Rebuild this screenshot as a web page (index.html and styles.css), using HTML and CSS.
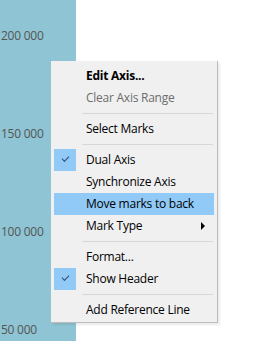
FILE: index.html
```html
<!DOCTYPE html>
<html lang="en">
<head>
    <meta charset="UTF-8">
    <title>Axis menu</title>
    <link rel="stylesheet" href="styles.css">
</head>
<body>
    <div class="view">
        <div class="axis">
            <div class="tick">200 000</div>
            <div class="tick">150 000</div>
            <div class="tick">100 000</div>
            <div class="tick">50 000</div>
        </div>

        <!-- context menu over the axis -->
        <ul class="menu">
            <li class="item bold">Edit Axis...</li>
            <li class="item disabled">Clear Axis Range</li>
            <li class="sep"></li>
            <li class="item">Select Marks</li>
            <li class="sep"></li>
            <li class="item checked">Dual Axis</li>
            <li class="item">Synchronize Axis</li>
            <li class="item active">Move marks to back</li>
            <li class="item sub">Mark Type</li>
            <li class="sep"></li>
            <li class="item">Format...</li>
            <li class="item checked">Show Header</li>
            <li class="sep"></li>
            <li class="item">Add Reference Line</li>
        </ul>
    </div>
</body>
</html>
```

FILE: styles.css
```css
*{
    box-sizing: border-box;
    margin: 0;
    padding: 0;
    list-style-type: none;
}
html, body{
    overflow: hidden;
}
body{
    background-color: white;
    font-family: "Open Sans", "Liberation Sans", sans-serif;
    font-size: 12px;
    letter-spacing: -0.25px;
}
.view{
    position: relative;
    width: 261px;
    height: 341px;
    overflow: hidden;
}
.axis{
    width: 76px;
    height: 100%;
    background-color: #8ec4d3;
    padding-top: 27px;
}
.tick{
    height: 98px;
    line-height: 18px;
    padding-left: 1px;
    color: #555;
}
.menu{
    position: absolute;
    left: 51px;
    top: 61px;
    width: 167px;
    padding: 4px 3px 1px 3px;
    background-color: #f0f0f0;
    border-right: 1px solid #bcbcbc;
    border-bottom: 1px solid #bcbcbc;
    box-shadow: 2px 2px 2px rgba(0, 0, 0, 0.08);
}
.item{
    position: relative;
    height: 22px;
    line-height: 22px;
    padding-left: 32px;
    color: #000;
}
.bold{
    font-weight: 700;
}
.disabled{
    color: #6d6d6d;
}
.active{
    background-color: #91c9f7;
}
.checked::before{
    content: "";
    position: absolute;
    left: 0;
    top: 0;
    width: 22px;
    height: 22px;
    background-color: #91c9f7;
}
.checked::after{
    content: "";
    position: absolute;
    left: 8px;
    top: 7px;
    width: 6px;
    height: 3px;
    border-left: 1.5px solid #2f4d6e;
    border-bottom: 1.5px solid #2f4d6e;
    transform: rotate(-45deg);
}
.sub::after{
    content: "";
    position: absolute;
    left: 147px;
    top: 7px;
    border-top: 4px solid transparent;
    border-bottom: 4px solid transparent;
    border-left: 4px solid #000;
}
.sep{
    height: 9px;
    margin-left: 28px;
    margin-right: 1px;
    padding-top: 4px;
}
.sep::before{
    content: "";
    display: block;
    height: 1px;
    background-color: #d7d7d7;
}
```
